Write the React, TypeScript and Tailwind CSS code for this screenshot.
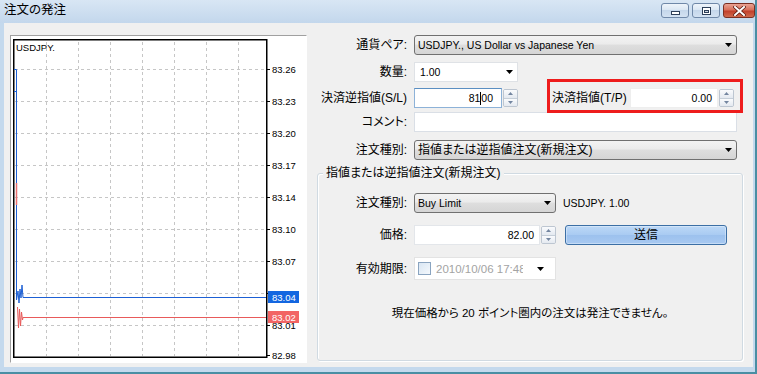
import React from "react";

const F = "font-['Liberation_Sans','Noto_Sans_CJK_JP',sans-serif]";

function Arrow() {
  return (
    <svg width="7" height="4" viewBox="0 0 7 4" className="shrink-0">
      <path d="M0 0H7L3.5 4Z" fill="#000" />
    </svg>
  );
}

function Spinner() {
  return (
    <div className="ml-[1px] w-[15px] h-[18px] flex flex-col rounded-[2px] border border-[#bdc6d1] overflow-hidden shrink-0">
      <div className="flex-1 flex items-center justify-center bg-[linear-gradient(#fafbfd,#e4e9f0)] border-b border-[#c5ced8]">
        <svg width="5" height="3" viewBox="0 0 5 3">
          <path d="M0 3H5L2.5 0Z" fill="#7385a0" />
        </svg>
      </div>
      <div className="flex-1 flex items-center justify-center bg-[linear-gradient(#fafbfd,#e4e9f0)]">
        <svg width="5" height="3" viewBox="0 0 5 3">
          <path d="M0 0H5L2.5 3Z" fill="#7385a0" />
        </svg>
      </div>
    </div>
  );
}

function Combo({ className, children }: { className: string; children: React.ReactNode }) {
  return (
    <div
      className={`h-[20px] rounded-[3px] border border-[#707070] bg-[linear-gradient(#f3f3f3,#ebebeb_45%,#dedede_50%,#d5d5d5)] flex items-center pl-[3px] pr-[4px] ${className}`}
    >
      <span className="flex-1 whitespace-nowrap overflow-hidden leading-[14px]">{children}</span>
      <Arrow />
    </div>
  );
}

function Label({ className, children }: { className: string; children: React.ReactNode }) {
  return <div className={`text-right text-[12px] leading-[14px] whitespace-nowrap ${className}`}>{children}</div>;
}

function Chart() {
  const vx = [46.5, 78.5, 110.5, 142.5, 174.5, 206.5, 238.5];
  const hy = [69.5, 101.5, 133.5, 165.5, 197.5, 229.5, 261.5, 293.5, 325.5];
  const labels = ["83.26", "83.23", "83.20", "83.17", "83.14", "83.10", "83.07", "83.04", "83.01"];
  return (
    <svg width="295" height="326" viewBox="0 0 295 326" style={{ fontFamily: "'Liberation Sans', sans-serif" }}>
      <g transform="translate(-11,-36)">
        {vx.map((x) => (
          <line key={"v" + x} x1={x} y1={42} x2={x} y2={356} stroke="#c6c6c6" strokeDasharray="3 3" />
        ))}
        {hy.map((y) => (
          <line key={"h" + y} x1={15} y1={y} x2={266} y2={y} stroke="#c6c6c6" strokeDasharray="3 3" />
        ))}
        <rect x={13.75} y={39.75} width={253} height={317.5} fill="none" stroke="#000" strokeWidth={1.5} />
        {hy.map((y) => (
          <line key={"t" + y} x1={267} y1={y} x2={270} y2={y} stroke="#000" />
        ))}
        <line x1={267} y1={355.5} x2={270} y2={355.5} stroke="#000" />
        {hy.map((y, i) => (
          <text key={"l" + y} x={272} y={y + 3.5} fontSize={9.5} fill="#000">
            {labels[i]}
          </text>
        ))}
        <text x={272} y={359} fontSize={9.5} fill="#000">
          82.98
        </text>
        <text x={16} y={50.5} fontSize={9.5} fill="#000">
          USDJPY.
        </text>
        {/* blue bid line */}
        <path d="M14 69.5H16.5M14 91.5H16.5" stroke="#1c5fd4" fill="none" />
        <path
          d="M16.5 69.5V300L18 291L19 303L20 289L21 298L22 285L23 297.5H266"
          stroke="#1c5fd4"
          fill="none"
        />
        {/* red ask line */}
        <path d="M16.5 183V205" stroke="#e87070" fill="none" strokeWidth={1.5} />
        <path
          d="M17.5 307L18.5 328L19.5 309L20.5 326L21.5 312L22.5 320L23 317.5H266"
          stroke="#e85a5a"
          fill="none"
        />
        <rect x={268} y={291} width={31} height={12} fill="#1366e0" />
        <text x={272} y={300.5} fontSize={9.5} fill="#fff">
          83.04
        </text>
        <rect x={268} y={311} width={31} height={12} fill="#f26464" />
        <text x={272} y={320.5} fontSize={9.5} fill="#fff">
          83.02
        </text>
      </g>
    </svg>
  );
}

function TitleBar() {
  return (
    <div className="h-[23px] shrink-0 flex items-start bg-[linear-gradient(#d8e6f4,#c3d7ec)] pl-[4px]">
      <span className="text-[12.5px] leading-[14px] mt-[3px]">注文の発注</span>
      <div className="ml-auto mt-[3px] flex gap-[3px]">
        <div className="w-[28px] h-[15px] rounded-[3px] border border-[#6f88a8] bg-[linear-gradient(#eef4fa,#d9e6f3_50%,#c5d7eb_50%,#d3e2f2)] flex items-end justify-center pb-[2px]">
          <div className="w-[9px] h-[4px] bg-white border border-[#2d3f58]" />
        </div>
        <div className="w-[28px] h-[15px] rounded-[3px] border border-[#6f88a8] bg-[linear-gradient(#eef4fa,#d9e6f3_50%,#c5d7eb_50%,#d3e2f2)] flex items-center justify-center">
          <div className="w-[9px] h-[8px] border border-[#2d3f58] bg-white flex items-center justify-center">
            <div className="w-[5px] h-[3px] mt-[1px] border border-[#2d3f58] bg-[#cdd9e6]" />
          </div>
        </div>
        <div className="w-[32px] h-[15px] rounded-[3px] border border-[#7a2f22] bg-[linear-gradient(#e9a393,#d8705a_45%,#c2402b_55%,#cf6a4d)] flex items-center justify-center">
          <svg width="13" height="10" viewBox="0 0 13 10">
            <path d="M2 1L11 9M11 1L2 9" stroke="#5a1a10" strokeWidth="3.5" strokeLinecap="square" />
            <path d="M2 1L11 9M11 1L2 9" stroke="#fff" strokeWidth="2" strokeLinecap="square" />
          </svg>
        </div>
      </div>
    </div>
  );
}

function Form() {
  return (
    <div className="ml-[4px] pt-[12px] w-[432px] flex flex-col text-[10.5px]">
      <div className="flex items-center h-[20px]">
        <Label className="w-[96px]">通貨ペア:</Label>
        <Combo className="ml-[7px] w-[323px]">USDJPY., US Dollar vs Japanese Yen</Combo>
      </div>
      <div className="flex items-center h-[20px] mt-[7px]">
        <Label className="w-[96px]">数量:</Label>
        <div className="ml-[7px] w-[104px] h-[20px] bg-white border border-[#dfe2e6] flex items-center pl-[5px] pr-[4px]">
          <span className="flex-1 leading-[14px]">1.00</span>
          <Arrow />
        </div>
      </div>
      <div className="flex items-center h-[20px] mt-[6px]">
        <Label className="w-[96px]">決済逆指値(S/L)</Label>
        <div className="ml-[7px] w-[88px] h-[20px] bg-white border border-[#8db2d8] border-t-[#5b8fc2] flex items-center justify-end pr-[8px] leading-[14px]">
          <span>81</span>
          <span className="w-[1px] h-[13px] bg-black" />
          <span>00</span>
        </div>
        <Spinner />
        <Label className="ml-[34px] w-[73px] text-left">決済指値(T/P)</Label>
        <div className="ml-[5px] w-[88px] h-[20px] bg-white border border-[#eeeeee] flex items-center justify-end pr-[5px] leading-[14px]">
          0.00
        </div>
        <Spinner />
      </div>
      <div className="flex items-center h-[20px] mt-[4px]">
        <Label className="w-[96px]">コメント:</Label>
        <div className="ml-[7px] w-[323px] h-[20px] bg-white border border-[#dadfe6]" />
      </div>
      <div className="flex items-center h-[20px] mt-[8px]">
        <Label className="w-[96px]">注文種別:</Label>
        <Combo className="ml-[7px] w-[323px] text-[12px]">指値または逆指値注文(新規注文)</Combo>
      </div>

      <div className="mt-[13px] ml-[6px] w-[426px] h-[188px] rounded-[3px] border border-[#d0dae2] shadow-[inset_1px_1px_0_#ffffff,1px_1px_0_#ffffff] flex flex-col">
        <span className="self-start -mt-[8px] ml-[5px] px-[3px] bg-[#f0f0f0] text-[12px] leading-[14px] whitespace-nowrap">
          指値または逆指値注文(新規注文)
        </span>
        <div className="flex items-center h-[20px] mt-[13px]">
          <Label className="w-[89px]">注文種別:</Label>
          <Combo className="ml-[7px] w-[142px]">Buy Limit</Combo>
          <span className="ml-[7px] leading-[14px] whitespace-nowrap">USDJPY. 1.00</span>
        </div>
        <div className="flex items-center h-[20px] mt-[12px]">
          <Label className="w-[89px]">価格:</Label>
          <div className="ml-[7px] w-[126px] h-[20px] bg-white border border-[#e3e6ea] flex items-center justify-end pr-[5px] leading-[14px]">
            82.00
          </div>
          <Spinner />
          <div className="ml-[9px] w-[162px] h-[20px] rounded-[3px] border border-[#3c6fa5] bg-[linear-gradient(#bcd8f7,#a9cbf2_50%,#9cc1ee_50%,#a8c9f1)] shadow-[inset_0_0_0_1px_rgba(255,255,255,0.35)] flex items-center justify-center text-[12px] leading-[14px]">
            送信
          </div>
        </div>
        <div className="flex items-center h-[23px] mt-[12px]">
          <Label className="w-[89px]">有効期限:</Label>
          <div className="ml-[7px] w-[142px] h-[23px] bg-white border border-[#e3e3e3] flex items-center">
            <div className="ml-[3px] w-[13px] h-[13px] border border-[#8aa4c0] bg-[linear-gradient(135deg,#d9e6f3,#f4f8fc)] shrink-0" />
            <span className="ml-[5px] w-[87px] overflow-hidden whitespace-nowrap text-[#a3a3a3] text-[11.5px] leading-[14px]">
              2010/10/06 17:48
            </span>
            <span className="ml-auto mr-[11px] flex">
              <Arrow />
            </span>
          </div>
        </div>
        <div className="mt-[26px] text-center text-[11.5px] leading-[14px]">現在価格から 20 ポイント圏内の注文は発注できません。</div>
      </div>
    </div>
  );
}

export default function App() {
  return (
    <div
      className={`relative w-[757px] h-[374px] overflow-hidden bg-[#c4d9ed] border-r-2 border-b-2 border-[#4a8ea3] flex flex-col ${F} [font-feature-settings:'palt'] text-black`}
    >
      <TitleBar />
      <div className="flex-1 ml-[4px] mr-[2px] mb-[5px] bg-[#f0f0f0] flex">
        <div className="ml-[6px] mt-[12px] w-[297px] h-[328px] border border-t-[#a0a0a0] border-l-[#a0a0a0] border-r-[#ffffff] border-b-[#ffffff] bg-white shrink-0">
          <Chart />
        </div>
        <Form />
      </div>
      <div className="absolute left-[547px] top-[79px] w-[196px] h-[34px] border-[3px] border-[#ee1c1c]" />
    </div>
  );
}
